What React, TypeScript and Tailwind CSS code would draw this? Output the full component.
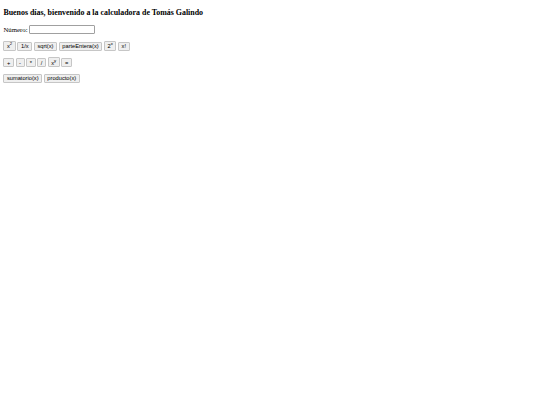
import React from "react";

function Btn({ children }: { children: React.ReactNode }) {
  return (
    <button className="inline-block align-baseline bg-[#efefef] border border-[#c6c6c6] rounded-[1px] px-[2.56px] py-[0.43px] text-[5.69px] leading-[normal] text-black [font-family:'Liberation_Sans',Arial,sans-serif]">
      {children}
    </button>
  );
}

function Sup({ children }: { children: React.ReactNode }) {
  return <sup className="text-[0.75em] align-super leading-none relative top-0">{children}</sup>;
}

export default function App() {
  return (
    <div className="bg-white min-h-[405px] px-[3.4px] pt-[8px] pb-[3.4px] [font-family:'Liberation_Serif','Times_New_Roman',serif] text-black">
      <h3 className="text-[7.92px] font-bold leading-[normal] mb-[8px]">
        Buenos días, bienvenido a la calculadora de Tomás Galindo
      </h3>
      <div className="text-[6.83px] leading-[normal]">
        Número:{" "}
        <input
          type="text"
          className="align-baseline w-[66px] h-[9px] border border-[#a0a0a0] rounded-[1px] bg-white px-[0.85px] text-[5.69px]"
        />
      </div>
      <p className="text-[6.83px] leading-[normal] mt-[6.83px]">
        <Btn>
          x<Sup>2</Sup>
        </Btn>{" "}
        <Btn>1/x</Btn> <Btn>sqrt(x)</Btn> <Btn>parteEntera(x)</Btn>{" "}
        <Btn>
          2<Sup>x</Sup>
        </Btn>{" "}
        <Btn>x!</Btn>
      </p>
      <p className="text-[6.83px] leading-[normal] mt-[6.83px]">
        <Btn>+</Btn> <Btn>-</Btn> <Btn>*</Btn> <Btn>/</Btn>{" "}
        <Btn>
          x<Sup>y</Sup>
        </Btn>{" "}
        <Btn>=</Btn>
      </p>
      <p className="text-[6.83px] leading-[normal] mt-[6.83px]">
        <Btn>sumatorio(x)</Btn> <Btn>producto(x)</Btn>
      </p>
    </div>
  );
}
